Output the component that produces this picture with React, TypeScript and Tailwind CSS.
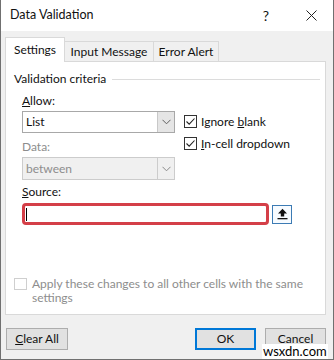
import React from "react";

const font = { fontFamily: 'Lato, "Noto Sans", sans-serif' };

function Chevron({ color = "#606060" }: { color?: string }) {
  return (
    <svg width="9" height="6" viewBox="0 0 9 6">
      <path d="M0.5 0.8 L4.5 4.8 L8.5 0.8" fill="none" stroke={color} strokeWidth="1" />
    </svg>
  );
}

function Check() {
  return (
    <div className="w-[13px] h-[13px] border border-[#333333] bg-white flex items-center justify-center">
      <svg width="11" height="11" viewBox="0 0 11 11">
        <path d="M1.5 5.5 L4.2 8.2 L9.5 2.5" fill="none" stroke="#222" strokeWidth="1.1" />
      </svg>
    </div>
  );
}

export default function App() {
  return (
    <div
      style={font}
      className="relative w-[334px] h-[360px] bg-[#f0f0f0] border-l border-r border-b border-[#707070] text-[12px] text-[#111] overflow-hidden flex flex-col"
    >
      {/* Title bar */}
      <div className="h-[31px] bg-white flex items-center pl-[9px] shrink-0">
        <span className="text-[12.5px] leading-none">Data Validation</span>
        <span className="ml-auto text-[14px] leading-none mr-[37px]">?</span>
        <svg width="11" height="11" viewBox="0 0 11 11" className="mr-[16px]">
          <path d="M0.5 0.5 L10.5 10.5 M10.5 0.5 L0.5 10.5" stroke="#222" strokeWidth="1" />
        </svg>
      </div>

      {/* Tabs */}
      <div className="flex items-end pl-[4px] mt-[6px] h-[25px] relative z-10">
        <div className="h-[25px] w-[60px] bg-white border-l border-t border-r border-[#d9d9d9] flex items-center justify-center pb-[1px]">
          Settings
        </div>
        <div className="h-[21px] w-[89px] border-t border-r border-b border-[#d9d9d9] flex items-center justify-center">
          Input Message
        </div>
        <div className="h-[21px] w-[65px] border-t border-r border-b border-[#d9d9d9] flex items-center justify-center">
          Error Alert
        </div>
      </div>

      {/* Panel */}
      <div className="mx-[4px] -mt-px h-[254px] w-[321px] bg-white border border-[#d9d9d9] flex flex-col pl-[8px]">
        <div className="flex items-center h-[16px] mt-[9px]">
          <span className="leading-none">Validation criteria</span>
          <div className="flex-1 h-px bg-[#dcdcdc] ml-[6px] mr-[5px]" />
        </div>

        <div className="flex pl-[8px] mt-[6px]">
          <div className="flex flex-col w-[153px]">
            <div className="h-[16px] flex items-center leading-none">
              <span><u>A</u>llow:</span>
            </div>
            <div className="mt-[2px] h-[22px] border border-[#a8a8a8] flex bg-white">
              <div className="flex-1 flex items-center pl-[3px]">List</div>
              <div className="w-[17px] bg-[#e5e5e5] border-l border-[#c8c8c8] flex items-center justify-center">
                <Chevron />
              </div>
            </div>
            <div className="mt-[6px] h-[16px] flex items-center leading-none text-[#8d8d8d]">Data:</div>
            <div className="mt-[2px] h-[23px] border border-[#cccccc] flex bg-[#f0f0f0]">
              <div className="flex-1 flex items-center pl-[3px] text-[#8d8d8d]">between</div>
              <div className="w-[17px] border-l border-[#cccccc] flex items-center justify-center">
                <Chevron color="#8a8a8a" />
              </div>
            </div>
          </div>
          <div className="flex flex-col ml-[9px] mt-[22px]">
            <div className="flex items-center h-[13px]">
              <Check />
              <span className="ml-[4px]">Ignore <u>b</u>lank</span>
            </div>
            <div className="flex items-center h-[13px] mt-[9px]">
              <Check />
              <span className="ml-[4px]"><u>I</u>n-cell dropdown</span>
            </div>
          </div>
        </div>

        <div className="pl-[8px] mt-[4px] h-[16px] flex items-center leading-none">
          <span><u>S</u>ource:</span>
        </div>
        <div className="pl-[8px] mt-[3px] flex items-center">
          <div className="w-[247px] h-[22px] border-[3px] border-[#d43f48] rounded-[4px] bg-white flex items-center pl-[1px]">
            <div className="w-px h-[13px] bg-black" />
          </div>
          <div className="ml-[3px] w-[20px] h-[19px] border border-[#3c7bb4] bg-[#f7fbff] flex items-center justify-center">
            <svg width="11" height="12" viewBox="0 0 11 12">
              <path d="M5.5 0.8 L10 5.6 L7.2 5.6 L7.2 8.6 L3.8 8.6 L3.8 5.6 L1 5.6 Z" fill="#111" />
              <rect x="0.5" y="10" width="10" height="1.3" fill="#111" />
            </svg>
          </div>
        </div>

        <div className="flex mt-[52px]">
          <div className="w-[13px] h-[12px] border border-[#cfcfcf] bg-white mt-[1px]" />
          <div className="ml-[5px] text-[#8d8d8d] leading-[14px] w-[288px]">
            Apply these changes to all other cells with the same settings
          </div>
        </div>
      </div>

      {/* Buttons */}
      <div className="flex mt-[13px] pl-[5px]">
        <div className="w-[62px] h-[22px] border border-[#adadad] bg-[#e1e1e1] flex items-center justify-center">
          <span><u>C</u>lear All</span>
        </div>
        <div className="ml-[127px] w-[61px] h-[22px] border-2 border-[#0078d7] bg-[#e1e1e1] flex items-center justify-center">
          OK
        </div>
        <div className="ml-[9px] w-[61px] h-[22px] border border-[#adadad] bg-[#e1e1e1] flex items-center justify-center">
          Cancel
        </div>
      </div>

      <span className="absolute left-[261px] top-[344px] bg-white text-black text-[13px] leading-[15px] px-[1px]">
        wsxdn.com
      </span>
    </div>
  );
}
